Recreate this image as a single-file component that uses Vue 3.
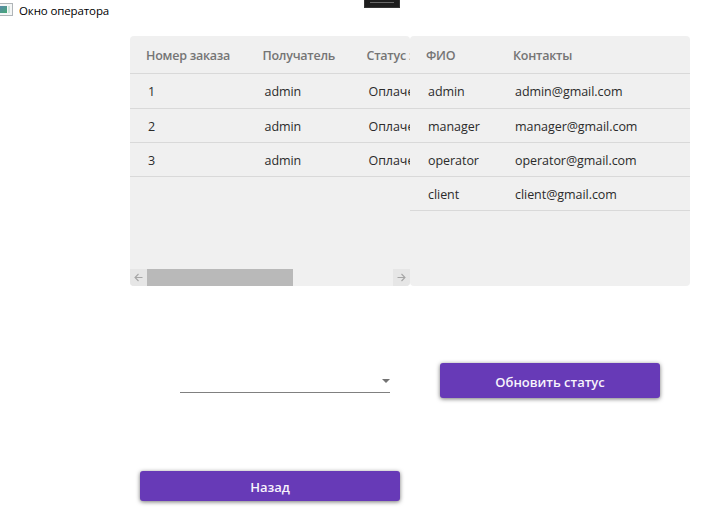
<script setup>
const orders = [
  { id: 1, receiver: 'admin', status: 'Оплачен' },
  { id: 2, receiver: 'admin', status: 'Оплачен' },
  { id: 3, receiver: 'admin', status: 'Оплачен' },
]
const users = ['admin', 'manager', 'operator', 'client']
</script>

<template>
  <div class="window">
    <header class="titlebar">
      <svg class="app-icon" width="14" height="14" viewBox="0 0 14 14">
        <defs>
          <linearGradient id="screen" x1="0" y1="0" x2="1" y2="1">
            <stop offset="0" stop-color="#5b86b0" />
            <stop offset="1" stop-color="#45a874" />
          </linearGradient>
        </defs>
        <rect x="-3" y="0.5" width="15.5" height="12" fill="#f4f6f6" stroke="#b0b5b8" />
        <rect x="-2" y="3" width="9" height="7" fill="url(#screen)" />
        <rect x="8" y="3" width="2" height="7" fill="#cfe6dc" />
      </svg>
      <span class="title">Окно оператора</span>
      <div class="debug-bar"><i></i></div>
    </header>

    <main>
      <section class="tables">
        <div class="grid orders">
          <div class="row head">
            <span>Номер заказа</span><span>Получатель</span><span>Статус заказа</span>
          </div>
          <div v-for="o in orders" :key="o.id" class="row">
            <span>{{ o.id }}</span><span>{{ o.receiver }}</span><span class="status">{{ o.status }}</span>
          </div>
          <div class="scrollbar">
            <div class="arrow">
              <svg width="9" height="9" viewBox="0 0 9 9"><path d="M8.5 4.5H1M4.5 1L1 4.5L4.5 8" /></svg>
            </div>
            <div class="thumb"></div>
            <div class="arrow right">
              <svg width="9" height="9" viewBox="0 0 9 9"><path d="M.5 4.5H8M4.5 1L8 4.5L4.5 8" /></svg>
            </div>
          </div>
        </div>
        <div class="grid users">
          <div class="row head"><span>ФИО</span><span>Контакты</span></div>
          <div v-for="u in users" :key="u" class="row">
            <span>{{ u }}</span><span>{{ u }}@gmail.com</span>
          </div>
        </div>
      </section>

      <section class="controls">
        <div class="select">
          <svg width="8" height="4" viewBox="0 0 8 4"><path d="M0 0H8L4 4Z" fill="#737373" /></svg>
        </div>
        <button class="update">Обновить статус</button>
      </section>
      <button class="back">Назад</button>
    </main>
  </div>
</template>

<style>
body {
  background: #fff;
}
</style>

<style scoped>
.window {
  width: 726px;
  height: 512px;
  overflow: hidden;
  background: #fff;
  font-family: 'Open Sans', 'Noto Sans', sans-serif;
  font-size: 12.5px;
  color: #2b2b2b;
}
.titlebar {
  display: flex;
  align-items: flex-start;
  height: 36px;
}
.app-icon {
  margin-top: 3px;
  flex: none;
}
.title {
  width: 345px;
  margin: 3px 0 0 5px;
  font-size: 11.5px;
  line-height: 16px;
  letter-spacing: -0.12px;
  color: #000;
}
.debug-bar {
  width: 36px;
  height: 8px;
  box-sizing: border-box;
  border: 1px solid #353535;
  border-top: 0;
  background: #1e1e1e;
  padding: 2px 5px 0;
}
.debug-bar i {
  display: block;
  height: 1px;
  background: #6a6a6a;
}
main {
  padding-left: 130px;
}
.tables {
  display: flex;
}
.grid {
  display: flex;
  flex-direction: column;
  width: 280px;
  height: 250px;
  background: #f0f0f0;
  border-radius: 4px;
  overflow: hidden;
}
.row {
  display: grid;
  flex: none;
  box-sizing: border-box;
  height: 34px;
  padding-left: 18px;
  border-bottom: 1px solid #d9d9d9;
  line-height: 36px;
  letter-spacing: -0.05px;
  white-space: nowrap;
}
.orders .row {
  grid-template-columns: 116.5px 104px 100px;
}
.users .row {
  grid-template-columns: 87px 1fr;
}
.row.head {
  height: 38px;
  padding-left: 16px;
  line-height: 40px;
  font-weight: 600;
  letter-spacing: -0.24px;
  color: #757575;
}
.row.head + .row {
  height: 35px;
}
.scrollbar {
  display: flex;
  height: 17px;
  margin-top: auto;
}
.arrow {
  display: flex;
  align-items: center;
  justify-content: center;
  width: 17px;
  background: #e6e6e6;
}
.arrow path {
  fill: none;
  stroke: #a6a6a6;
  stroke-width: 1.1;
}
.arrow.right {
  margin-left: auto;
}
.thumb {
  width: 146px;
  background: #b9b9b9;
}
.controls {
  display: flex;
  padding: 77px 0 0 50px;
}
.select {
  display: flex;
  align-items: center;
  justify-content: flex-end;
  box-sizing: border-box;
  width: 210px;
  height: 30px;
  padding-top: 6px;
  border-bottom: 1px solid #808080;
}
button {
  display: block;
  padding: 0;
  border: 0;
  border-radius: 3px;
  background: #673ab7;
  box-shadow: 0 1px 4px rgba(0, 0, 0, 0.55);
  color: #f7f3fc;
  font: 600 13px 'Open Sans', 'Noto Sans', sans-serif;
  letter-spacing: -0.03px;
}
.update {
  width: 220px;
  height: 35px;
  margin-left: 50px;
  padding-top: 3px;
}
.back {
  width: 260px;
  height: 30px;
  margin: 73px 0 0 10px;
  padding-top: 2px;
}
</style>
